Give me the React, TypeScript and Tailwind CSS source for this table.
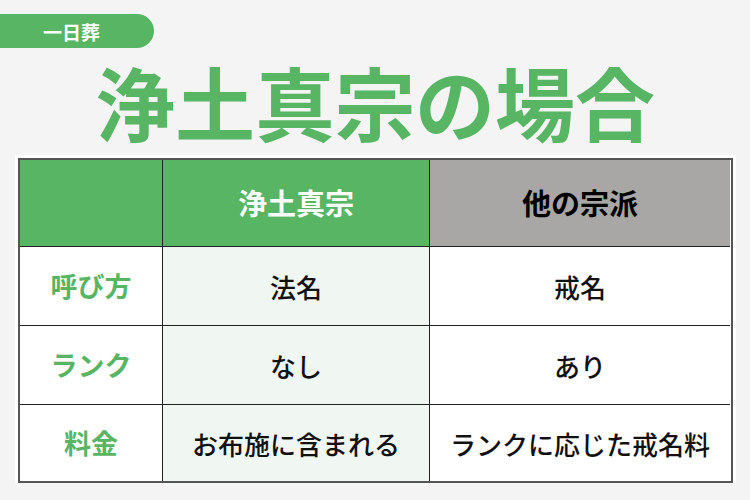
import React from "react";

const font = { fontFamily: '"Noto Sans CJK JP", "Noto Sans", sans-serif' };

export default function App() {
  const rows = [
    { label: "呼び方", a: "法名", b: "戒名" },
    { label: "ランク", a: "なし", b: "あり" },
    { label: "料金", a: "お布施に含まれる", b: "ランクに応じた戒名料" },
  ];
  return (
    <div className="w-[750px] h-[500px] bg-[#f4f4f4] overflow-hidden flex flex-col" style={font}>
      <div className="mt-[14px] h-[34px] w-[154px] bg-[#58b564] rounded-r-full flex items-center pl-[43px]">
        <span className="text-white font-bold text-[19px] leading-none">一日葬</span>
      </div>
      <div className="mt-[12px] h-[80px] flex items-center justify-center text-[#58b564] font-semibold text-[80px] leading-none">
        浄土真宗の場合
      </div>
      <div className="mt-[15px] ml-[15px] w-[721px] bg-white pt-[3px] px-[3px]">
        <div className="border-2 border-[#555] grid grid-cols-[142px_267px_301px] grid-rows-[86px_79px_79px_77px] text-[26px] font-medium text-[#111]">
          <div className="bg-[#58b564]" />
          <div className="bg-[#58b564] border-l border-[#222] flex items-center justify-center text-white font-bold text-[29px]">
            浄土真宗
          </div>
          <div className="bg-[#a8a7a5] border-l border-[#222] flex items-center justify-center text-black font-bold text-[29px]">
            他の宗派
          </div>
          {rows.map((r) => (
            <React.Fragment key={r.label}>
              <div className="border-t border-[#222] bg-white flex items-center justify-center text-[#58b564] font-bold text-[27px]">
                {r.label}
              </div>
              <div className="border-t border-l border-[#222] bg-[#f0f6f2] flex items-center justify-center">
                {r.a}
              </div>
              <div className="border-t border-l border-[#222] bg-white flex items-center justify-center">
                {r.b}
              </div>
            </React.Fragment>
          ))}
        </div>
      </div>
    </div>
  );
}
